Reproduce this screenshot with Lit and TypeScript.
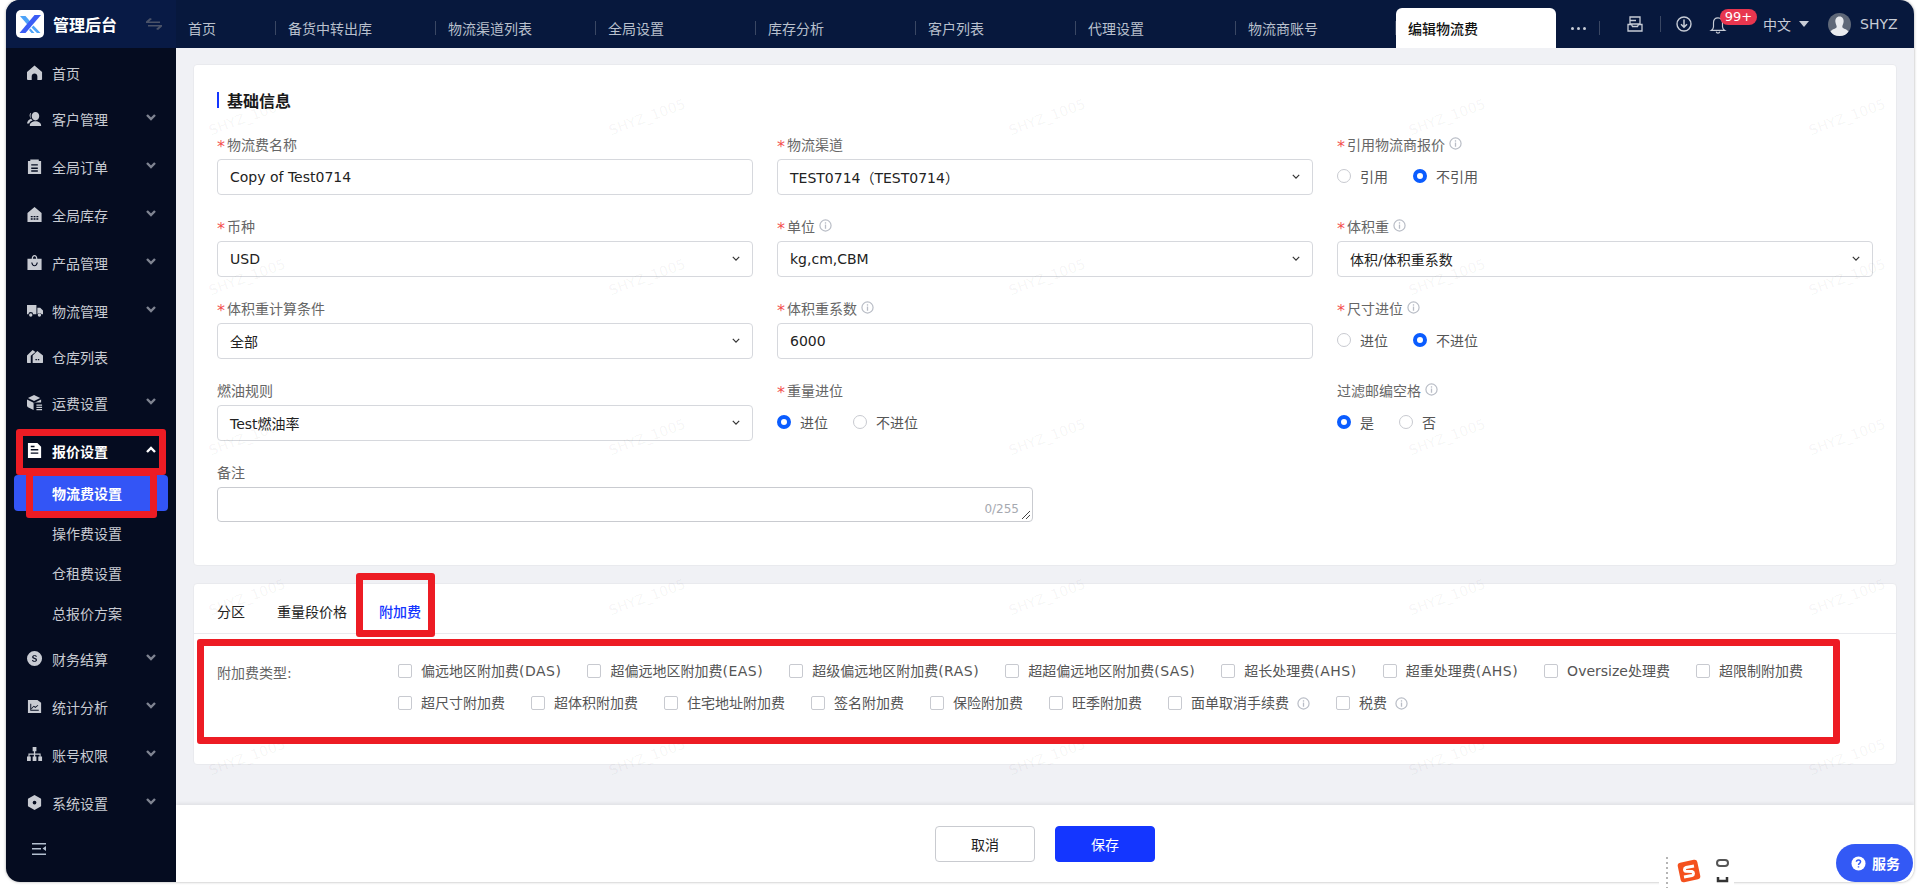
import { LitElement, html, css, svg, nothing, TemplateResult } from "lit";
import { customElement } from "lit/decorators.js";

const ICONS: Record<string, TemplateResult> = {
    home: svg`<path d="M8 0.5 16 7.500V15C16 15.600 15.600 16 15 16H11V12C11 10.300 9.700 9 8 9S5 10.300 5 12V16H1C.4 16 0 15.600 0 15V7.500Z"/>`,
    user: svg`<path d="M9 1c2.4 0 4 1.9 4 4.3 0 2.6-1.7 4.7-4 4.7S5 7.900 5 5.300C5 2.900 6.600 1 9 1ZM4.400 1.800C3 2.500 2.600 3.800 2.800 5.400 3 6.600 3.500 7.600 4.300 8.200 1.900 9 .3 10.800 0 13.200H2.300C2.800 11.500 4 10.400 6 10 4.500 8.800 3.700 7.100 3.700 5.300 3.700 4 4 2.800 4.400 1.800ZM9 11c-3.300 0-6 1.700-6 4.500V16h12v-.5C15 12.700 12.300 11 9 11Z"/>`,
    order: svg`<path fill-rule="evenodd" d="M1 2h2.500V.5h9V2H15v14H1ZM4.500 5.500v1.500h7V5.500ZM4.500 9v1.500h7V9ZM4.500 12v1.500h7V12Z"/>`,
    stock: svg`<path fill-rule="evenodd" d="M8 0 15.500 6.500V16H.5V6.500ZM4 9.500V11H6V9.500ZM7 9.500V11H9V9.500ZM10 9.500V11H12V9.500ZM4 12V13.500H6V12ZM7 12V13.500H9V12ZM10 12V13.500H12V12Z"/>`,
    bag: svg`<path fill-rule="evenodd" d="M5 4C5 1.500 6.300 0 8 0s3 1.500 3 4h4.500V16H.5V4ZM6.300 4H9.700C9.700 2.300 9 1.200 8 1.200S6.300 2.300 6.300 4ZM4.500 8C4.800 10.500 6.200 12 8 12S11.200 10.500 11.500 8H10.300C10 9.700 9.200 10.800 8 10.800S6 9.700 5.700 8Z"/>`,
    truck: svg`<path d="M0 2H10V12H6.500A2.500 2.500 0 0 0 1.500 12H0ZM11 5H14L17 8V12H15.500A2.500 2.500 0 0 0 11 12ZM4 11A1.800 1.800 0 1 1 4 14.600 1.800 1.800 0 0 1 4 11ZM13.200 11A1.800 1.800 0 1 1 13.200 14.600 1.800 1.800 0 0 1 13.200 11Z"/>`,
    house: svg`<path fill-rule="evenodd" d="M6 1 9 3.200 4 7.300V15H1C.4 15 0 14.600 0 14V7ZM11 2 17 7V14C17 14.600 16.600 15 16 15H6V7ZM9 10.500V12H10.500V10.500ZM11.500 10.500V12H13V10.500Z"/>`,
    box: svg`<path d="M7.500 0 14 3.200 7.500 6.500 1 3.200ZM0 4.800 7 8.300V16L1 13C.4 12.700 0 12.100 0 11.500ZM15 4.800V8H9.500C8.700 8 8 8.700 8 9.500V8.300ZM10 10H16V11.300H10ZM10 12.500H16V13.800H10ZM10 15H16V16.300H10Z"/>`,
    doc: svg`<path fill-rule="evenodd" d="M1 0H11L15 4V16H1ZM4 6.500V8H12V6.500ZM4 10V11.500H12V10ZM4 3V4.500H8V3Z"/>`,
    money: svg`<path fill-rule="evenodd" d="M8 0A8 8 0 1 1 8 16 8 8 0 0 1 8 0ZM10.500 6C10.300 5 9.400 4.500 8 4.500 6.500 4.500 5.500 5.200 5.500 6.300 5.500 8.700 9.300 7.800 9.300 9.500 9.300 10.100 8.800 10.500 8 10.500 7.200 10.500 6.600 10.100 6.400 9.500H5.300C5.500 10.800 6.500 11.500 8 11.500 9.600 11.500 10.600 10.700 10.600 9.500 10.600 6.900 6.800 7.800 6.800 6.200 6.800 5.700 7.300 5.400 8 5.400 8.700 5.400 9.200 5.700 9.400 6Z"/>`,
    chart: svg`<path fill-rule="evenodd" d="M1 1H11L15 4V15H1ZM3.500 5V12.500H12.500V11.500H4.500V5ZM5 10.500 7.200 8.300 8.800 9.500 12 7 11.500 6.300 8.800 8.300 7.200 7.100 4.500 9.800Z"/>`,
    org: svg`<path d="M6 0H10V4.500H8.700V7H14.500V10H16V15H12V10H13.300V8.200H8.700V10H10V15H6V10H7.300V8.200H2.700V10H4V15H0V10H1.500V7H7.300V4.500H6Z"/>`,
    hex: svg`<path fill-rule="evenodd" d="M8 0 15 4V12L8 16 1 12V4ZM8 6A2 2 0 1 0 8 10 2 2 0 0 0 8 6Z"/>`,
};

interface MenuItem {
    label: string;
    icon: string;
    arrow?: boolean;
    open?: boolean;
}

const MENU: MenuItem[] = [
    { label: "首页", icon: "home" },
    { label: "客户管理", icon: "user", arrow: true },
    { label: "全局订单", icon: "order", arrow: true },
    { label: "全局库存", icon: "stock", arrow: true },
    { label: "产品管理", icon: "bag", arrow: true },
    { label: "物流管理", icon: "truck", arrow: true },
    { label: "仓库列表", icon: "house" },
    { label: "运费设置", icon: "box", arrow: true },
    { label: "报价设置", icon: "doc", arrow: true, open: true },
    { label: "财务结算", icon: "money", arrow: true },
    { label: "统计分析", icon: "chart", arrow: true },
    { label: "账号权限", icon: "org", arrow: true },
    { label: "系统设置", icon: "hex", arrow: true },
];

const SUBMENU = ["物流费设置", "操作费设置", "仓租费设置", "总报价方案"];
const TABS = ["首页", "备货中转出库", "物流渠道列表", "全局设置", "库存分析", "客户列表", "代理设置", "物流商账号"];
const FEES: [string, string][] = [
    ["偏远地区附加费", "(DAS)"],
    ["超偏远地区附加费", "(EAS)"],
    ["超级偏远地区附加费", "(RAS)"],
    ["超超偏远地区附加费", "(SAS)"],
    ["超长处理费", "(AHS)"],
    ["超重处理费", "(AHS)"],
    ["Oversize处理费", ""],
    ["超限制附加费", ""],
    ["超尺寸附加费", ""],
    ["超体积附加费", ""],
    ["住宅地址附加费", ""],
    ["签名附加费", ""],
    ["保险附加费", ""],
    ["旺季附加费", ""],
];

const info = html`<svg class="info" viewBox="0 0 14 14"><circle cx="7" cy="7" r="6" fill="none" stroke="#b9bdc6" stroke-width="1.300"/><rect x="6.300" y="6" width="1.400" height="4.500" fill="#b9bdc6"/><rect x="6.300" y="3.500" width="1.400" height="1.500" fill="#b9bdc6"/></svg>`;
const chevron = html`<svg class="sel-arrow" viewBox="0 0 10 6"><path d="M1 1 5 5 9 1" fill="none" stroke="#333" stroke-width="1.500"/></svg>`;

@customElement("app-root")
export class AppRoot extends LitElement {
    static styles = css`
        :host {
            display: block;
            position: relative;
            height: 888px;
            background: #fff;
            font-family: "DejaVu Sans", "Noto Sans CJK SC", sans-serif;
            font-size: 14px;
            color: #333;
            overflow: hidden;
        }
        .window {
            position: relative;
            margin-left: 6px;
            width: 1908px;
            height: 882px;
            border-radius: 14px;
            overflow: hidden;
            display: flex;
            flex-direction: column;
            box-shadow: 0 0 3px rgba(0, 0, 0, 0.35);
        }
        .top {
            height: 48px;
            flex: none;
            display: flex;
            background: #07183d;
        }
        .brand {
            width: 170px;
            flex: none;
            display: flex;
            align-items: center;
            padding-left: 10px;
            box-sizing: border-box;
            background: #081a45;
            color: #fff;
            font-size: 16px;
            font-weight: 700;
        }
        .logo {
            width: 28px;
            height: 28px;
            margin-right: 9px;
            flex: none;
        }
        .swap {
            width: 16px;
            height: 14px;
            margin-left: 29px;
        }
        .tabs {
            display: flex;
            align-items: flex-end;
            flex: none;
        }
        .tab {
            width: 160px;
            height: 40px;
            box-sizing: border-box;
            padding: 0 12px;
            display: flex;
            align-items: center;
            color: #b9c0cd;
            position: relative;
        }
        .tab:first-child {
            width: 100px;
        }
        .tab::after {
            content: "";
            position: absolute;
            right: 0;
            top: 13px;
            height: 14px;
            width: 1px;
            background: #3a4763;
        }
        .tab.active {
            background: #fff;
            color: #111;
            font-weight: 500;
            border-radius: 6px 6px 0 0;
        }
        .tab.active::after {
            display: none;
        }
        .top-right {
            flex: 1;
            display: flex;
            align-items: center;
            position: relative;
            color: #c7ccd6;
        }
        .dots {
            width: 44px;
            height: 40px;
            margin-top: 8px;
            display: flex;
            align-items: center;
            justify-content: center;
            gap: 3px;
            border-right: 1px solid transparent;
            position: relative;
        }
        .dots i {
            width: 3px;
            height: 3px;
            border-radius: 50%;
            background: #c7ccd6;
        }
        .dots::after {
            content: "";
            position: absolute;
            right: 0;
            top: 13px;
            height: 14px;
            width: 1px;
            background: #3a4763;
        }
        .mail {
            width: 16px;
            height: 16px;
            margin-left: 26px;
        }
        .vline {
            width: 1px;
            height: 16px;
            background: #3a4763;
            margin-left: 17px;
        }
        .dl {
            width: 16px;
            height: 16px;
            margin-left: 15px;
        }
        .bell {
            width: 18px;
            height: 18px;
            margin-left: 17px;
            margin-top: 2px;
        }
        .badge {
            position: absolute;
            left: 164px;
            top: 9px;
            height: 16px;
            width: 37px;
            border-radius: 8px;
            background: #e8364f;
            color: #fff;
            font-size: 13px;
            line-height: 16px;
            text-align: center;
        }
        .lang {
            margin-left: 36px;
        }
        .caret {
            width: 0;
            height: 0;
            border: 5px solid transparent;
            border-top: 6px solid #c7ccd6;
            border-bottom: 0;
            margin-left: 8px;
        }
        .avatar {
            width: 23px;
            height: 23px;
            margin-left: 19px;
        }
        .who {
            margin-left: 9px;
        }
        .body {
            flex: 1;
            display: flex;
            min-height: 0;
        }
        .side {
            width: 170px;
            flex: none;
            background: #050c20;
            color: #c8cbd2;
            padding-top: 3px;
            box-sizing: border-box;
            display: flex;
            flex-direction: column;
        }
        .item {
            height: 48px;
            display: flex;
            align-items: center;
            padding-left: 21px;
            flex: none;
        }
        .item.plain {
            height: 44px;
        }
        .item.open {
            color: #fff;
            font-weight: 700;
        }
        .ico {
            width: 16px;
            height: 16px;
            fill: currentColor;
            margin-right: 9px;
            flex: none;
        }
        .arrow {
            width: 10px;
            height: 7px;
            margin-left: auto;
            margin-right: 20px;
            margin-top: -4px;
            color: #7f8491;
        }
        .item.open .arrow {
            color: #fff;
        }
        .sub {
            height: 36px;
            margin: 0 8px 4px;
            border-radius: 4px;
            display: flex;
            align-items: center;
            padding-left: 38px;
            flex: none;
        }
        .sub.on {
            background: #3355f6;
            color: #fff;
            font-weight: 700;
        }
        .collapse {
            margin: 15px 0 0 26px;
            width: 15px;
            height: 14px;
        }
        .main {
            flex: 1;
            display: flex;
            flex-direction: column;
            background: #f0f1f5;
            min-width: 0;
        }
        .scroll {
            flex: 1;
            padding: 16px 17px 0;
        }
        .card {
            background: #fff;
            border: 1px solid #e9eaee;
            border-radius: 4px;
            box-sizing: border-box;
        }
        .basic {
            height: 502px;
            padding: 0 23px;
            margin-bottom: 17px;
        }
        .title {
            height: 20px;
            margin: 25px 0 23px;
            display: flex;
            align-items: center;
            font-size: 16px;
            font-weight: 700;
            color: #1a1a1a;
        }
        .title::before {
            content: "";
            width: 2px;
            height: 16px;
            background: #1436ff;
            margin-right: 8px;
        }
        .grid {
            display: grid;
            grid-template-columns: repeat(3, 536px);
            column-gap: 24px;
        }
        .field {
            height: 82px;
        }
        .label {
            height: 21px;
            margin-bottom: 5px;
            display: flex;
            align-items: center;
            color: #666;
        }
        .label b {
            width: 10px;
            color: #f4504f;
            font-weight: 400;
            font-size: 16px;
            transform: translateY(3px);
        }
        .info {
            width: 13px;
            height: 13px;
            margin-left: 4px;
        }
        .control {
            height: 36px;
            border: 1px solid #d6d8dd;
            border-radius: 4px;
            box-sizing: border-box;
            display: flex;
            align-items: center;
            justify-content: space-between;
            padding: 0 12px;
            color: #222;
        }
        .sel-arrow {
            width: 8px;
            height: 5px;
            margin-top: -2px;
        }
        .radios {
            height: 34px;
            display: flex;
            align-items: center;
            color: #555;
            gap: 25px;
        }
        .radio {
            display: flex;
            align-items: center;
            gap: 9px;
        }
        .radio i {
            width: 14px;
            height: 14px;
            box-sizing: border-box;
            border: 1px solid #c8cad0;
            border-radius: 50%;
        }
        .radio.on i {
            border: 4px solid #0a5cff;
        }
        .note {
            width: 816px;
            height: 35px;
            border: 1px solid #c9cbd0;
            border-radius: 4px;
            box-sizing: border-box;
            position: relative;
        }
        .count {
            position: absolute;
            right: 13px;
            bottom: 5px;
            font-size: 12px;
            color: #a6a9b0;
        }
        .grip {
            position: absolute;
            right: 1px;
            bottom: 1px;
            width: 10px;
            height: 10px;
        }
        .fee {
            height: 182px;
            padding: 0 23px;
        }
        .tabbar {
            height: 50px;
            margin: 0 -23px;
            padding: 5px 23px 0;
            display: flex;
            align-items: center;
            gap: 32px;
            box-sizing: border-box;
            border-bottom: 1px solid #e9eaee;
            color: #222;
        }
        .tabbar .cur {
            color: #1436ff;
            font-weight: 500;
        }
        .fee-row {
            display: flex;
            padding-top: 27px;
        }
        .fee-label {
            width: 181px;
            flex: none;
            height: 32px;
            padding-top: 1px;
            box-sizing: border-box;
            color: #666;
        }
        .checks {
            display: flex;
            flex-wrap: wrap;
            column-gap: 26px;
            color: #555;
        }
        .check {
            height: 32px;
            display: flex;
            align-items: flex-start;
            gap: 9px;
            line-height: 20px;
        }
        .check i {
            width: 14px;
            height: 14px;
            margin-top: 3px;
            border: 1px solid #c8cad0;
            border-radius: 2px;
            box-sizing: border-box;
        }
        .check .info {
            margin: 4px 0 0 -1px;
        }
        .code {
            letter-spacing: 0.5px;
        }
        .foot {
            height: 77px;
            flex: none;
            background: #fff;
            box-shadow: 0 -2px 3px rgba(0, 0, 0, 0.06);
            display: flex;
            align-items: center;
            justify-content: center;
            gap: 20px;
        }
        .btn {
            width: 100px;
            height: 36px;
            border: 1px solid #c9cbd0;
            border-radius: 4px;
            box-sizing: border-box;
            display: flex;
            align-items: center;
            justify-content: center;
            color: #222;
        }
        .btn.primary {
            background: #1436ff;
            border-color: #1436ff;
            color: #fff;
        }
        .service {
            position: absolute;
            left: 1836px;
            top: 844px;
            width: 77px;
            height: 38px;
            box-sizing: border-box;
            padding-left: 15px;
            border-radius: 19px;
            background: #3359f5;
            color: #fff;
            font-weight: 700;
            display: flex;
            align-items: center;
            gap: 6px;
        }
        .service svg {
            width: 15px;
            height: 15px;
        }
        .ime {
            position: absolute;
            left: 1659px;
            top: 856px;
            width: 75px;
            height: 32px;
            background: #fff;
        }
        .ime svg {
            width: 75px;
            height: 32px;
            display: block;
        }
        .mark {
            position: absolute;
            left: 47px;
            top: 37px;
            width: 1873px;
            height: 851px;
            overflow: hidden;
            display: grid;
            grid-template-columns: repeat(5, 400px);
            grid-auto-rows: 160px;
            pointer-events: none;
        }
        .mark span {
            display: flex;
            align-items: center;
            justify-content: center;
            color: rgba(0, 0, 0, 0.05);
            transform: rotate(-20deg);
        }
        .red {
            position: absolute;
            border: 7px solid #ed1c24;
            border-radius: 3px;
            box-sizing: border-box;
            pointer-events: none;
        }
        .r1 { left: 16px; top: 429px; width: 150px; height: 46px; }
        .r2 { left: 26px; top: 473px; width: 131px; height: 45px; border-top-width: 3px; }
        .r3 { left: 356px; top: 573px; width: 79px; height: 64px; }
        .r4 { left: 197px; top: 639px; width: 1643px; height: 105px; }
    `;

    private field(label: string, required: boolean, hasInfo: boolean, body: TemplateResult) {
        return html`<div class="field">
            <div class="label">${required ? html`<b>*</b>` : nothing}${label}${hasInfo ? info : nothing}</div>
            ${body}
        </div>`;
    }

    private input(text: string) {
        return html`<div class="control">${text}</div>`;
    }

    private select(text: string) {
        return html`<div class="control">${text}${chevron}</div>`;
    }

    private radios(a: string, b: string, on: number) {
        return html`<div class="radios">
            <div class="radio ${on === 0 ? "on" : ""}"><i></i>${a}</div>
            <div class="radio ${on === 1 ? "on" : ""}"><i></i>${b}</div>
        </div>`;
    }

    private renderSide() {
        return html`<div class="side">
            ${MENU.map(
                (m) => html`<div class="item ${m.arrow ? "" : "plain"} ${m.open ? "open" : ""}">
                        <svg class="ico" viewBox="0 0 17 17">${ICONS[m.icon]}</svg>${m.label}
                        ${m.arrow
                            ? html`<svg class="arrow" viewBox="0 0 10 7"><path d="${m.open ? "M1 6 5 2 9 6" : "M1 1 5 5 9 1"}" fill="none" stroke="currentColor" stroke-width="2.400"/></svg>`
                            : nothing}
                    </div>
                    ${m.open
                        ? SUBMENU.map((s, i) => html`<div class="sub ${i === 0 ? "on" : ""}">${s}</div>`)
                        : nothing}`
            )}
            <svg class="collapse" viewBox="0 0 15 14"><path d="M0 1H14V2.500H0ZM0 6H9V7.500H0ZM0 11.500H14V13H0ZM14 4V9L10.500 6.500Z" fill="#b4c0d0"/></svg>
        </div>`;
    }

    private renderTop() {
        return html`<div class="top">
            <div class="brand">
                <svg class="logo" viewBox="0 0 28 28">
                    <rect width="28" height="28" rx="5" fill="#fff"/>
                    <path d="M4 6H9.500L16 13.500 13 16.500Z" fill="#4da3f8"/>
                    <path d="M18.500 5H25L9.500 23H3.500Z" fill="#3a5cf5"/>
                    <path d="M15.500 17.500 17.500 15.500 24.500 23H21ZM13 20 14.500 18.500 18.500 23H15.500Z" fill="#4da3f8"/>
                </svg>
                管理后台
                <svg class="swap" viewBox="0 0 16 14"><path d="M0 4.500H14V6H0ZM4 1 0 4.500H3L6 2ZM2 8H16V9.500H2ZM12 13 16 9.500H13L10 12Z" fill="#4a5268"/></svg>
            </div>
            <div class="tabs">
                ${TABS.map((t) => html`<div class="tab">${t}</div>`)}
                <div class="tab active">编辑物流费</div>
            </div>
            <div class="top-right">
                <div class="dots"><i></i><i></i><i></i></div>
                <svg class="mail" viewBox="0 0 16 16"><path d="M3 1H13V8H3ZM3 4.500H9M1 8.500V15H15V8.500H11.500L10.500 10.500H5.500L4.500 8.500Z" fill="none" stroke="#c7ccd6" stroke-width="1.300"/></svg>
                <div class="vline"></div>
                <svg class="dl" viewBox="0 0 16 16"><circle cx="8" cy="8" r="7" fill="none" stroke="#c7ccd6" stroke-width="1.400"/><path d="M8 3.500V11M5 8.300 8 11.300 11 8.300" fill="none" stroke="#c7ccd6" stroke-width="1.500"/></svg>
                <svg class="bell" viewBox="0 0 18 20"><path d="M9 2C5.500 2 4 4.500 4 7.500V12C4 13.500 3 15 1.500 16H16.500C15 15 14 13.500 14 12V7.500C14 4.500 12.500 2 9 2ZM7 17.500C7.300 18.500 8 19 9 19S10.700 18.500 11 17.500" fill="none" stroke="#c7ccd6" stroke-width="1.300"/></svg>
                <span class="badge">99+</span>
                <span class="lang">中文</span>
                <i class="caret"></i>
                <svg class="avatar" viewBox="0 0 23 23">
                    <circle cx="11.500" cy="11.500" r="11.500" fill="#5f6878"/>
                    <path d="M11.500 3.500C14.500 3.500 16 6 15.600 9 15.300 11 14.300 12.500 14.300 14 14.300 15.500 19 16 20.500 18.500 18.500 21.500 15.500 23 11.500 23S4.500 21.500 2.500 18.500C4 16 8.700 15.500 8.700 14 8.700 12.500 7.700 11 7.400 9 7 6 8.500 3.500 11.500 3.500Z" fill="#e9ebef"/>
                </svg>
                <span class="who">SHYZ</span>
            </div>
        </div>`;
    }

    private renderForm() {
        return html`<div class="card basic">
            <div class="title">基础信息</div>
            <div class="grid">
                ${this.field("物流费名称", true, false, this.input("Copy of Test0714"))}
                ${this.field("物流渠道", true, false, this.select("TEST0714（TEST0714）"))}
                ${this.field("引用物流商报价", true, true, this.radios("引用", "不引用", 1))}
                ${this.field("币种", true, false, this.select("USD"))}
                ${this.field("单位", true, true, this.select("kg,cm,CBM"))}
                ${this.field("体积重", true, true, this.select("体积/体积重系数"))}
                ${this.field("体积重计算条件", true, false, this.select("全部"))}
                ${this.field("体积重系数", true, true, this.input("6000"))}
                ${this.field("尺寸进位", true, true, this.radios("进位", "不进位", 1))}
                ${this.field("燃油规则", false, false, this.select("Test燃油率"))}
                ${this.field("重量进位", true, false, this.radios("进位", "不进位", 0))}
                ${this.field("过滤邮编空格", false, true, this.radios("是", "否", 0))}
            </div>
            <div class="label">备注</div>
            <div class="note">
                <span class="count">0/255</span>
                <svg class="grip" viewBox="0 0 10 10"><path d="M9 1 1 9M9 5 5 9" stroke="#444" stroke-width="1"/></svg>
            </div>
        </div>`;
    }

    private renderFee() {
        return html`<div class="card fee">
            <div class="tabbar"><span>分区</span><span>重量段价格</span><span class="cur">附加费</span></div>
            <div class="fee-row">
                <div class="fee-label">附加费类型:</div>
                <div class="checks">
                    ${FEES.map(([name, code]) => html`<div class="check"><i></i><span>${name}<span class="code">${code}</span></span></div>`)}
                    <div class="check"><i></i>面单取消手续费 ${info}</div>
                    <div class="check"><i></i>税费 ${info}</div>
                </div>
            </div>
        </div>`;
    }

    render() {
        return html`<div class="window">
                ${this.renderTop()}
                <div class="body">
                    ${this.renderSide()}
                    <div class="main">
                        <div class="scroll">${this.renderForm()} ${this.renderFee()}</div>
                        <div class="foot">
                            <div class="btn">取消</div>
                            <div class="btn primary">保存</div>
                        </div>
                    </div>
                </div>
            </div>
            <div class="mark">${Array.from({ length: 25 }, () => html`<span>SHYZ_1005</span>`)}</div>
            <div class="red r1"></div>
            <div class="red r2"></div>
            <div class="red r3"></div>
            <div class="red r4"></div>
            <div class="ime">
                <svg viewBox="0 0 75 32">
                    <path d="M8 1V32" stroke="#b5b5b5" stroke-width="2" stroke-dasharray="2 3"/>
                    <rect x="20" y="5" width="20" height="20" rx="3" fill="#f4511e" transform="rotate(-12 30 15)"/>
                    <path d="M35 10 27 11.500C25 12 25 15 27 15.300L33 15.500C35 16 35 19 33 19.500L25 21" fill="none" stroke="#fff" stroke-width="3"/>
                    <rect x="58" y="4" width="11" height="6" rx="3" fill="none" stroke="#555" stroke-width="2"/>
                    <path d="M59 21V25H68V21" fill="none" stroke="#333" stroke-width="2.500"/>
                </svg>
            </div>
            <div class="service">
                <svg viewBox="0 0 16 16"><circle cx="8" cy="8" r="7.500" fill="#fff"/><path d="M5.800 6.200C5.800 5 6.800 4.300 8 4.300S10.200 5 10.200 6.200C10.200 7.800 8 7.800 8 9.500M8 10.800V12.300" fill="none" stroke="#3359f5" stroke-width="1.600"/></svg>
                服务
            </div>`;
    }
}
